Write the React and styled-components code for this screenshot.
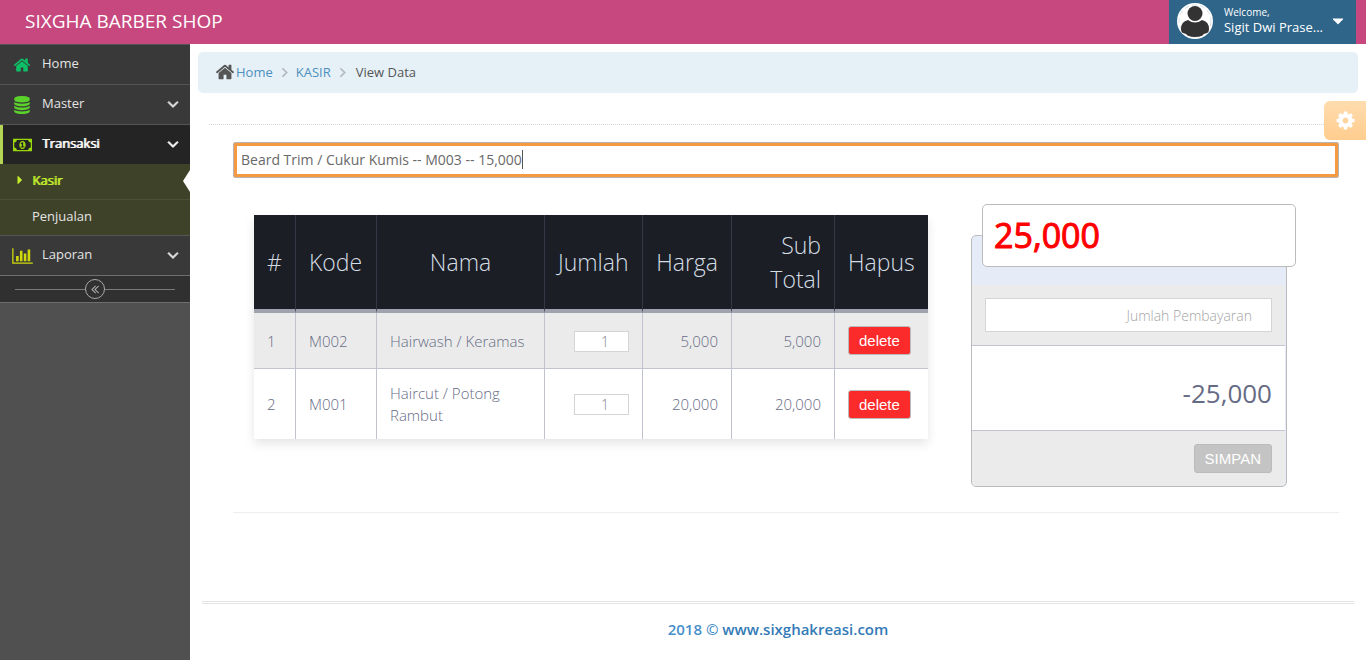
import {useState} from 'react';
import styled, {createGlobalStyle} from 'styled-components';

const icons = {
  home: {w: 1792, d: "M1472 992v480q0 26-19 45t-45 19h-384v-384h-256v384h-384q-26 0-45-19t-19-45v-480q0-1 .5-3t.5-3l575-474 575 474q1 2 1 6zm223-69l-62 74q-8 9-21 11h-3q-13 0-21-7l-692-577-692 577q-12 8-24 7-13-2-21-11l-62-74q-8-10-7-23.5t11-21.5l719-599q32-26 76-26t76 26l244 204v-195q0-14 9-23t23-9h192q14 0 23 9t9 23v408l219 182q10 8 11 21.5t-7 23.5z"},
  database: {w: 1792, d: "M896 768q237 0 443-43t325-127v170q0 69-103 128t-280 93.5-385 34.5-385-34.5-280-93.5-103-128v-170q119 84 325 127t443 43zm0 768q237 0 443-43t325-127v170q0 69-103 128t-280 93.5-385 34.5-385-34.5-280-93.5-103-128v-170q119 84 325 127t443 43zm0-384q237 0 443-43t325-127v170q0 69-103 128t-280 93.5-385 34.5-385-34.5-280-93.5-103-128v-170q119 84 325 127t443 43zm0-1152q208 0 385 34.5t280 93.5 103 128v128q0 69-103 128t-280 93.5-385 34.5-385-34.5-280-93.5-103-128v-128q0-69 103-128t280-93.5 385-34.5z"},
  money: {w: 1920, d: "M768 1152h384v-96h-128v-448h-114l-148 137 77 80q42-37 55-57h2v288h-128v96zm512-256q0 70-21 142t-59.5 134-101.5 101-138 39-138-39-101.5-101-59.5-134-21-142 21-142 59.5-134 101.5-101 138-39 138 39 101.5 101 59.5 134 21 142zm512 256v-512q-106 0-181-75t-75-181h-1152q0 106-75 181t-181 75v512q106 0 181 75t75 181h1152q0-106 75-181t181-75zm128-832v1152q0 26-19 45t-45 19h-1792q-26 0-45-19t-19-45v-1152q0-26 19-45t45-19h1792q26 0 45 19t19 45z"},
  chart: {w: 2048, d: "M640 896v512h-256v-512h256zm384-512v1024h-256v-1024h256zm1024 1152v128h-2048v-1536h128v1408h1920zm-640-896v768h-256v-768h256zm384-384v1152h-256v-1152h256z"},
  angleDown: {w: 1792, line: 90, d: "M1395 736q0 13-10 23l-466 466q-10 10-23 10t-23-10l-466-466q-10-10-10-23t10-23l50-50q10-10 23-10t23 10l393 393 393-393q10-10 23-10t23 10l50 50q10 10 10 23z"},
  angleRight: {w: 1792, line: 60, d: "M1171 960q0 13-10 23l-466 466q-10 10-23 10t-23-10l-50-50q-10-10-10-23t10-23l393-393-393-393q-10-10-10-23t10-23l50-50q10-10 23-10t23 10l466 466q10 10 10 23z"},
  doubleLeft: {w: 1792, d: "M1011 1376q0 13-10 23l-50 50q-10 10-23 10t-23-10l-466-466q-10-10-10-23t10-23l466-466q10-10 23-10t23 10l50 50q10 10 10 23t-10 23l-393 393 393 393q10 10 10 23zm384 0q0 13-10 23l-50 50q-10 10-23 10t-23-10l-466-466q-10-10-10-23t10-23l466-466q10-10 23-10t23 10l50 50q10 10 10 23t-10 23l-393 393 393 393q10 10 10 23z"},
  caretRight: {w: 1792, d: "M1152 896q0 26-19 45l-448 448q-19 19-45 19t-45-19-19-45v-896q0-26 19-45t45-19 45 19l448 448q19 19 19 45z"},
  caretDown: {w: 1792, d: "M1408 704q0 26-19 45l-448 448q-19 19-45 19t-45-19l-448-448q-19-19-19-45t19-45 45-19h896q26 0 45 19t19 45z"},
  cog: {w: 1792, d: "M1152 896q0-106-75-181t-181-75-181 75-75 181 75 181 181 75 181-75 75-181zm512-109v222q0 12-8 23t-20 13l-185 28q-19 54-39 91 35 50 107 138 10 12 10 25t-9 23q-27 37-99 108t-94 71q-12 0-26-9l-138-108q-44 23-91 38-16 136-29 186-7 28-36 28h-222q-14 0-24.5-8.5t-11.5-21.5l-28-184q-49-16-90-37l-141 107q-10 9-25 9-14 0-25-11-126-114-165-168-7-10-7-23 0-12 8-23 15-21 51-66.5t54-70.5q-27-50-41-99l-183-27q-13-2-21-12.5t-8-23.5v-222q0-12 8-23t19-13l186-28q14-46 39-92-40-57-107-138-10-12-10-24 0-10 9-23 26-36 98.5-107.5t94.5-71.5q13 0 26 10l138 107q44-23 91-38 16-136 29-186 7-28 36-28h222q14 0 24.5 8.5t11.5 21.5l28 184q49 16 90 37l142-107q9-9 24-9 13 0 25 10 129 119 165 170 7 8 7 22 0 12-8 23-15 21-51 66.5t-54 70.5q26 50 41 98l183 28q13 2 21 12.5t8 23.5z"},
}

const Icon = ({name, size = 18}) => (
  <svg
    height={size}
    width={Math.round(size * icons[name].w / 1792)}
    viewBox={`0 0 ${icons[name].w} 1792`}
    fill="currentColor"
    stroke="currentColor"
    strokeWidth={icons[name].line || 0}
    aria-hidden="true"
  >
    <path d={icons[name].d} />
  </svg>
)

const startCart = [
  {kode: "M002", nama: "Hairwash / Keramas", jumlah: 1, harga: 5000},
  {kode: "M001", nama: "Haircut / Potong Rambut", jumlah: 1, harga: 20000},
]

const rupiah = (value) => value.toLocaleString("en-US");

const App = () => {
const [cart, changeCart] = useState(startCart);
const [search, changeSearch] = useState("Beard Trim / Cukur Kumis -- M003 -- 15,000");
const [bayar, changeBayar] = useState("");

const total = cart.reduce((sum, item) => sum + item.jumlah * item.harga, 0);
const kembali = Number(bayar) - total;

const deleteItem = (kode) => {
  changeCart(prev => prev.filter(item => item.kode !== kode));
}

const changeJumlah = (kode, value) => {
  changeCart(prev => prev.map(item => item.kode === kode ? {...item, jumlah: Number(value) || 0} : item));
}

    return (
        <>
          <GlobalStyle />
          <Navbar>
            <Brand href="#">SIXGHA BARBER SHOP</Brand>
            <UserButton type="button">
              <Avatar viewBox="0 0 36 36" aria-hidden="true">
                <circle cx="18" cy="18" r="18" fill="#fff" />
                <circle cx="18" cy="18" r="16" fill="none" stroke="#b9cbd8" strokeWidth="0.6" strokeDasharray="5 3" />
                <circle cx="18" cy="10.500" r="7.500" fill="#333" />
                <path d="M11 17q7 5 14 0q7 1.500 7 9q0 4-3.500 4.500q-2 .2-3 2q-7.500 3-15 0q-1-1.800-3-2q-3.500-.5-3.500-4.500q0-7.500 7-9z" fill="#333" />
              </Avatar>
              <UserText>
                <small>Welcome,</small>
                Sigit Dwi Prase...
              </UserText>
              <Icon name="caretDown" />
            </UserButton>
          </Navbar>
          <Page>
            <Sidebar>
              <MenuLink href="#">
                <MenuIcon $color="#0dc068"><Icon name="home" /></MenuIcon>
                <MenuText>Home</MenuText>
              </MenuLink>
              <MenuLink href="#">
                <MenuIcon $color="#5bd22c"><Icon name="database" /></MenuIcon>
                <MenuText>Master</MenuText>
                <Icon name="angleDown" />
              </MenuLink>
              <MenuLink href="#" $open>
                <MenuIcon $color="#9bd80b"><Icon name="money" /></MenuIcon>
                <MenuText $bold>Transaksi</MenuText>
                <Icon name="angleDown" />
              </MenuLink>
              <Submenu>
                <SubLink href="#" $active><Icon name="caretRight" size={14} />Kasir</SubLink>
                <SubLink href="#">Penjualan</SubLink>
              </Submenu>
              <MenuLink href="#">
                <MenuIcon $color="#cfd90a"><Icon name="chart" /></MenuIcon>
                <MenuText>Laporan</MenuText>
                <Icon name="angleDown" />
              </MenuLink>
              <Collapse>
                <CollapseButton type="button" aria-label="Collapse menu"><Icon name="doubleLeft" size={14} /></CollapseButton>
              </Collapse>
            </Sidebar>
            <Main>
              <Breadcrumbs>
                <Icon name="home" size={20} />
                <a href="#">Home</a>
                <Icon name="angleRight" size={16} />
                <a href="#">KASIR</a>
                <Icon name="angleRight" size={16} />
                <span>View Data</span>
              </Breadcrumbs>
              <SettingsButton type="button" aria-label="Settings"><Icon name="cog" size={21} /></SettingsButton>
              <Content>
                <SearchInput aria-label="Cari item" value={search} onChange={(e) => changeSearch(e.target.value)} />
                <Kasir>
                  <CartTable>
                    <thead>
                      <tr>
                        <Th $width="42px">#</Th>
                        <Th $width="81px">Kode</Th>
                        <Th $width="168px" $align="center">Nama</Th>
                        <Th $width="98px">Jumlah</Th>
                        <Th $width="89px" $align="right">Harga</Th>
                        <Th $width="103px" $align="right">Sub Total</Th>
                        <Th $width="93px">Hapus</Th>
                      </tr>
                    </thead>
                    <tbody>
                      {cart.map((item, i) => (
                        <tr key={item.kode}>
                          <Td>{i + 1}</Td>
                          <Td>{item.kode}</Td>
                          <Td>{item.nama}</Td>
                          <Td $align="right">
                            <QtyInput aria-label={"Jumlah " + item.nama} value={item.jumlah} onChange={(e) => changeJumlah(item.kode, e.target.value)} />
                          </Td>
                          <Td $align="right">{rupiah(item.harga)}</Td>
                          <Td $align="right">{rupiah(item.harga * item.jumlah)}</Td>
                          <Td><DeleteButton type="button" onClick={() => deleteItem(item.kode)}>delete</DeleteButton></Td>
                        </tr>
                      ))}
                    </tbody>
                  </CartTable>
                  <Payment>
                    <Total>{rupiah(total)}</Total>
                    <PayRow>
                      <PayInput aria-label="Jumlah Pembayaran" placeholder="Jumlah Pembayaran" value={bayar} onChange={(e) => changeBayar(e.target.value)} />
                    </PayRow>
                    <Change>{rupiah(kembali)}</Change>
                    <SaveRow>
                      <SaveButton type="button" disabled={kembali < 0}>SIMPAN</SaveButton>
                    </SaveRow>
                  </Payment>
                </Kasir>
              </Content>
              <Footer>
                <span>2018 © </span><a href="#">www.sixghakreasi.com</a>
              </Footer>
            </Main>
          </Page>
        </>
    )
}

export default App

const GlobalStyle = createGlobalStyle`
  * {
    box-sizing: border-box;
  }
  body {
    margin: 0;
    background: #fff;
    color: #393939;
    font-family: "Open Sans", sans-serif;
    font-size: 13px;
    line-height: 20px;
  }
  #root {
    display: flex;
    flex-direction: column;
    min-height: 100vh;
  }
  a {
    text-decoration: none;
  }
  svg {
    display: block;
    flex: none;
  }
`

const Navbar = styled.header`
  display: flex;
  justify-content: space-between;
  height: 44px;
  padding: 0 10px 0 25px;
  background: #c6487e;
`

const Brand = styled.a`
  color: #fff;
  font-size: 19px;
  line-height: 42px;
`

const UserButton = styled.button`
  display: flex;
  align-items: center;
  padding: 0 9px 2px 8px;
  border: 0;
  background: #2e6589;
  color: #fff;
  font: inherit;
  text-align: left;
`

const Avatar = styled.svg`
  width: 36px;
  height: 36px;
`

const UserText = styled.span`
  margin: 0 6px 2px 11px;
  line-height: 15px;
  small {
    display: block;
    font-size: 10px;
  }
`

const Page = styled.div`
  display: flex;
  flex: 1;
`

const Sidebar = styled.nav`
  flex: none;
  width: 190px;
  background: #505050;
`

const MenuLink = styled.a`
  display: flex;
  align-items: center;
  height: 40px;
  padding: 0 8px 0 7px;
  border-top: 1px solid #555;
  background: ${props => props.$open ? "#242424" : "#393939"};
  color: ${props => props.$open ? "#fff" : "#e4e4e4"};
  box-shadow: ${props => props.$open ? "inset 3px 0 0 #b4d455" : "none"};
  > svg {
    margin-bottom: 2px;
  }
`

const MenuIcon = styled.span`
  display: flex;
  justify-content: center;
  width: 30px;
  margin-right: 5px;
  color: ${props => props.$color};
`

const MenuText = styled.span`
  flex: 1;
  padding-bottom: 3px;
  text-shadow: ${props => props.$bold ? "1px 0 0 currentColor" : "none"};
`

const Submenu = styled.div`
  background: #3e4229;
`

const SubLink = styled.a`
  position: relative;
  display: flex;
  align-items: center;
  height: 36px;
  padding: 0 0 3px ${props => props.$active ? "13px" : "32px"};
  border-bottom: 1px solid #4c5036;
  color: ${props => props.$active ? "#c4ee2b" : "#e4e4e4"};
  text-shadow: ${props => props.$active ? "1px 0 0 currentColor" : "none"};
  &:last-child {
    height: 35px;
    border-bottom: 0;
  }
  svg {
    margin-right: 5px;
  }
  &::after {
    content: "";
    display: ${props => props.$active ? "block" : "none"};
    position: absolute;
    top: 6px;
    right: 0;
    border: 11px solid transparent;
    border-left-width: 0;
    border-right: 7px solid #fff;
  }
`

const Collapse = styled.div`
  display: flex;
  align-items: center;
  height: 28px;
  padding: 0 15px;
  border: solid #6e6e6e;
  border-width: 1px 0;
  background: #303030;
  &::before, &::after {
    content: "";
    flex: 1;
    height: 1px;
    background: #7a7a7a;
  }
`

const CollapseButton = styled.button`
  display: flex;
  align-items: center;
  justify-content: center;
  width: 20px;
  height: 20px;
  padding: 0;
  border: 1px solid #aaa;
  border-radius: 50%;
  background: none;
  color: #aaa;
`

const Main = styled.main`
  position: relative;
  display: flex;
  flex: 1;
  flex-direction: column;
  min-width: 0;
  padding: 8px;
`

const Breadcrumbs = styled.nav`
  display: flex;
  align-items: center;
  height: 41px;
  padding: 0 17px 2px;
  border-radius: 5px;
  background: #e6f1f7;
  color: #555;
  a {
    margin: 0 4px 0 1px;
    color: #4c8fbd;
  }
  a + svg {
    margin-right: 2px;
    color: #b2b6bf;
  }
  span {
    margin-left: 3px;
  }
`

const SettingsButton = styled.button`
  position: absolute;
  top: 57px;
  right: 0;
  display: flex;
  align-items: center;
  justify-content: center;
  width: 42px;
  height: 39px;
  padding: 0;
  border: 0;
  border-radius: 6px 0 0 6px;
  background: linear-gradient(#ffdcae, #ffcd8e);
  color: #fff;
`

const Content = styled.section`
  margin: 31px 12px 0 11px;
  padding: 17px 7px 0 24px;
  border-top: 1px dotted #d5d5d5;
`

const SearchInput = styled.input`
  display: block;
  width: 100%;
  height: 36px;
  padding: 0 4px 1px;
  border: 4px solid #f59942;
  border-radius: 3px;
  outline: 1px solid #b5b5b5;
  outline-offset: -1px;
  /* text cursor at the end of the chosen item */
  background: linear-gradient(#555, #555) 285px 4px / 1px 19px no-repeat #fff;
  color: #696969;
  font: 14px "Open Sans", sans-serif;
`

const Kasir = styled.div`
  display: grid;
  grid-template-columns: 337fr 158fr;
  align-items: start;
  gap: 43px;
  padding: 37px 52px 25px 21px;
  border-bottom: 1px solid #eee;
`

const CartTable = styled.table`
  width: 100%;
  border-collapse: separate;
  border-spacing: 0;
  box-shadow: 0 5px 10px rgba(0, 0, 0, 0.1);
  tbody tr:nth-child(odd) {
    background: #ebebeb;
  }
  tbody tr:last-child td {
    border-bottom: 0;
  }
`

const Th = styled.th`
  width: ${props => props.$width};
  padding: 13px;
  border-right: 1px solid #343a45;
  border-bottom: 4px solid #9ea3af;
  background: #1b1e24;
  color: #d5dde5;
  font-size: 23px;
  font-weight: 300;
  line-height: 34px;
  text-align: ${props => props.$align || "left"};
  &:last-child {
    border-right: 0;
  }
`

const Td = styled.td`
  padding: 13px;
  border-right: 1px solid #c1c3d1;
  border-bottom: 1px solid #c1c3d1;
  color: #666b85;
  font-size: 15px;
  font-weight: 300;
  line-height: 22px;
  text-align: ${props => props.$align || "left"};
  &:last-child {
    border-right: 0;
  }
`

const QtyInput = styled.input`
  display: inline-block;
  width: 55px;
  height: 21px;
  padding: 0 19px 0 4px;
  border: 1px solid #d5d5d5;
  background: #fff;
  color: #858585;
  font: 300 14px "Open Sans", sans-serif;
  text-align: right;
`

const DeleteButton = styled.button`
  display: block;
  height: 29px;
  padding: 0 10px;
  border: 1px solid #bbb;
  border-radius: 3px;
  background: #fc2b2b;
  color: #fff;
  font: 15px "Liberation Sans", Arial, sans-serif;
`

const Payment = styled.div`
  position: relative;
  margin-top: 20px;
  padding: 49px 1px 0 0;
  border: 1px solid #bbb;
  border-radius: 5px;
  background: #e5ecf7;
`

const Total = styled.output`
  position: absolute;
  top: -32px;
  right: -10px;
  left: 10px;
  height: 63px;
  padding: 0 11px;
  border: 1px solid #bbb;
  border-radius: 5px;
  background: #fff;
  color: #f00;
  font-size: 34px;
  line-height: 61px;
  -webkit-text-stroke: 1px;
`

const PayRow = styled.div`
  padding: 13px;
  border-bottom: 1px solid #c1c3d1;
  background: #ebebeb;
`

const PayInput = styled.input`
  display: block;
  width: 100%;
  height: 34px;
  padding: 0 19px 0 4px;
  border: 1px solid #d5d5d5;
  background: #fff;
  color: #858585;
  font: 300 14px "Open Sans", sans-serif;
  text-align: right;
  &::placeholder {
    color: #a5a5a5;
  }
`

const Change = styled.output`
  display: block;
  height: 85px;
  padding: 5px 13px 0;
  border-bottom: 1px solid #c1c3d1;
  background: #fff;
  color: #666b85;
  font-size: 26px;
  line-height: 84px;
  text-align: right;
`

const SaveRow = styled.div`
  display: flex;
  justify-content: flex-end;
  padding: 13px;
  border-radius: 0 0 4px 4px;
  background: #ebebeb;
`

const SaveButton = styled.button`
  height: 29px;
  padding: 0 10px;
  border: 1px solid #bbb;
  border-radius: 3px;
  background: #c4c4c4;
  color: #fff;
  font: 15px "Liberation Sans", Arial, sans-serif;
`

const Footer = styled.footer`
  margin: auto 4px 0;
  padding: 12px 0 10px;
  border-top: 3px double #e5e5e5;
  color: #478fca;
  font-size: 15px;
  font-weight: 600;
  line-height: 26px;
  text-align: center;
  a {
    color: #337ab7;
  }
`
